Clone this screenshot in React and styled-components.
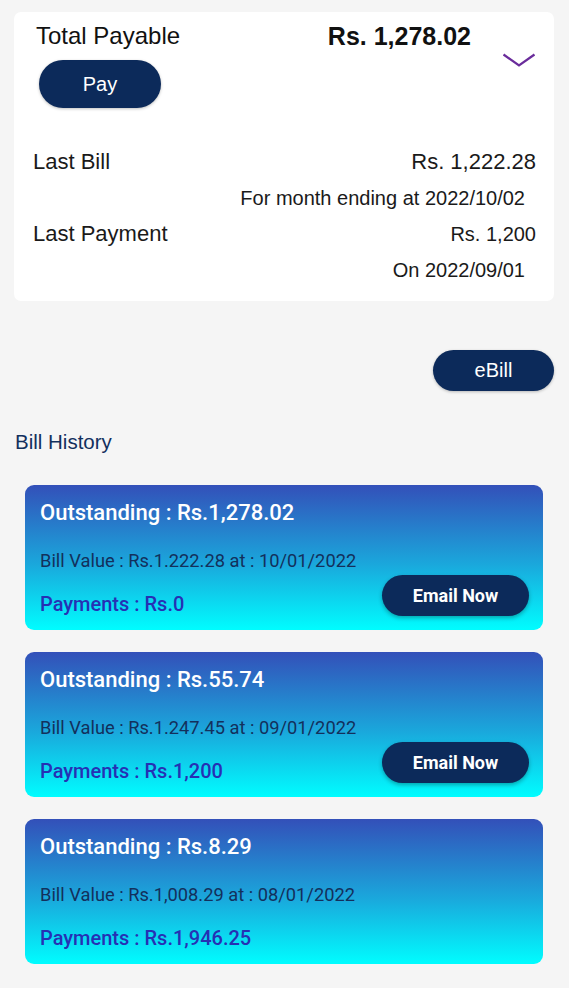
import React from "react";
import styled, { createGlobalStyle } from "styled-components";

const GlobalStyle = createGlobalStyle`
  body {
    margin: 0;
    background: #f5f5f5;
    font-family: "Liberation Sans", Arial, sans-serif;
  }
`;

const Page = styled.div`
  width: 569px;
  padding-top: 12px;
  padding-bottom: 24px;
`;

const SummaryCard = styled.div`
  margin: 0 15px 0 14px;
  background: #ffffff;
  border-radius: 7px;
  padding: 12px 18px 13px 19px;
`;

const Header = styled.div`
  display: flex;
  align-items: flex-start;
`;

const HeaderLeft = styled.div`
  display: flex;
  flex-direction: column;
  align-items: flex-start;
  padding-left: 3px;
`;

const Title = styled.div`
  font-size: 24px;
  line-height: 24px;
  color: #111;
`;

const Amount = styled.div`
  margin-left: auto;
  font-size: 25px;
  line-height: 24px;
  font-weight: 700;
  color: #111;
`;

const Chevron = styled.div`
  margin: 29px 0 0 31px;
  display: flex;
`;

const PillButton = styled.button`
  border: none;
  background: #0c2a5a;
  color: #fff;
  font-family: "Liberation Sans", Arial, sans-serif;
  font-size: 20px;
  width: ${(p) => p.$width}px;
  height: ${(p) => p.$height}px;
  border-radius: ${(p) => p.$height / 2}px;
  box-shadow: 0 1px 3px rgba(0, 0, 0, 0.25);
  cursor: pointer;
`;

const PayButton = styled(PillButton)`
  margin-top: 12px;
  margin-left: 3px;
`;

const Details = styled.div`
  margin-top: 36px;
  display: grid;
  grid-template-columns: 1fr auto;
  grid-auto-rows: 36px;
  align-items: center;
`;

const Label = styled.div`
  font-size: 22px;
  color: #1a1a1a;
`;

const Value = styled.div`
  font-size: ${(p) => p.$size}px;
  color: #1a1a1a;
  text-align: right;
  grid-column: ${(p) => (p.$sub ? "1 / 3" : "2")};
  padding-right: ${(p) => (p.$sub ? 11 : 0)}px;
`;

const ActionRow = styled.div`
  display: flex;
  justify-content: flex-end;
  padding-right: 15px;
  margin-top: 49px;
`;

const SectionTitle = styled.div`
  margin: 39px 0 0 15px;
  font-size: 20.5px;
  line-height: 24px;
  color: #12305e;
`;

const HistoryList = styled.div`
  margin: 31px 26px 0 25px;
  display: flex;
  flex-direction: column;
  gap: 22px;
`;

const BillCard = styled.div`
  height: 145px;
  box-sizing: border-box;
  border-radius: 9px;
  background: linear-gradient(180deg, #3350b9 0%, #1aa8dc 55%, #00fdff 100%);
  display: flex;
  padding: 16px 14px 14px 15px;
  font-family: Roboto, "Liberation Sans", sans-serif;
`;

const BillText = styled.div`
  display: flex;
  flex-direction: column;
  flex: 1;
`;

const Outstanding = styled.div`
  color: #fff;
  font-size: 22px;
  font-weight: 500;
  line-height: 24px;
`;

const BillValue = styled.div`
  margin-top: 25px;
  color: #13305c;
  font-size: 18.3px;
  line-height: 22px;
`;

const Payments = styled.div`
  margin-top: 20px;
  color: #2630b4;
  font-size: 20px;
  font-weight: 500;
  line-height: 24px;
`;

const EmailButton = styled.button`
  align-self: flex-end;
  width: 147px;
  height: 41px;
  border: none;
  border-radius: 21px;
  background: #0c2a5a;
  color: #fff;
  font-family: Roboto, "Liberation Sans", sans-serif;
  font-size: 18px;
  font-weight: 700;
  box-shadow: 0 2px 4px rgba(0, 0, 0, 0.3);
  cursor: pointer;
`;

const bills = [
  {
    outstanding: "1,278.02",
    value: "1.222.28",
    date: "10/01/2022",
    payments: "0",
    email: true,
  },
  {
    outstanding: "55.74",
    value: "1.247.45",
    date: "09/01/2022",
    payments: "1,200",
    email: true,
  },
  {
    outstanding: "8.29",
    value: "1,008.29",
    date: "08/01/2022",
    payments: "1,946.25",
    email: false,
  },
];

export default function App() {
  return (
    <>
      <GlobalStyle />
      <Page>
        <SummaryCard>
          <Header>
            <HeaderLeft>
              <Title>Total Payable</Title>
              <PayButton $width={122} $height={48}>
                Pay
              </PayButton>
            </HeaderLeft>
            <Amount>Rs. 1,278.02</Amount>
            <Chevron>
              <svg width="34" height="14" viewBox="0 0 34 14">
                <path
                  d="M1.5 1.5 L17 12.5 L32.5 1.5"
                  fill="none"
                  stroke="#6a2c9b"
                  strokeWidth="2.2"
                />
              </svg>
            </Chevron>
          </Header>
          <Details>
            <Label>Last Bill</Label>
            <Value $size={22}>Rs. 1,222.28</Value>
            <Value $size={20} $sub>
              For month ending at 2022/10/02
            </Value>
            <Label>Last Payment</Label>
            <Value $size={20}>Rs. 1,200</Value>
            <Value $size={20} $sub>
              On 2022/09/01
            </Value>
          </Details>
        </SummaryCard>

        <ActionRow>
          <PillButton $width={121} $height={41}>
            eBill
          </PillButton>
        </ActionRow>

        <SectionTitle>Bill History</SectionTitle>

        <HistoryList>
          {bills.map((bill) => (
            <BillCard key={bill.date}>
              <BillText>
                <Outstanding>Outstanding : Rs.{bill.outstanding}</Outstanding>
                <BillValue>
                  Bill Value : Rs.{bill.value} at : {bill.date}
                </BillValue>
                <Payments>Payments : Rs.{bill.payments}</Payments>
              </BillText>
              {bill.email && <EmailButton>Email Now</EmailButton>}
            </BillCard>
          ))}
        </HistoryList>
      </Page>
    </>
  );
}
